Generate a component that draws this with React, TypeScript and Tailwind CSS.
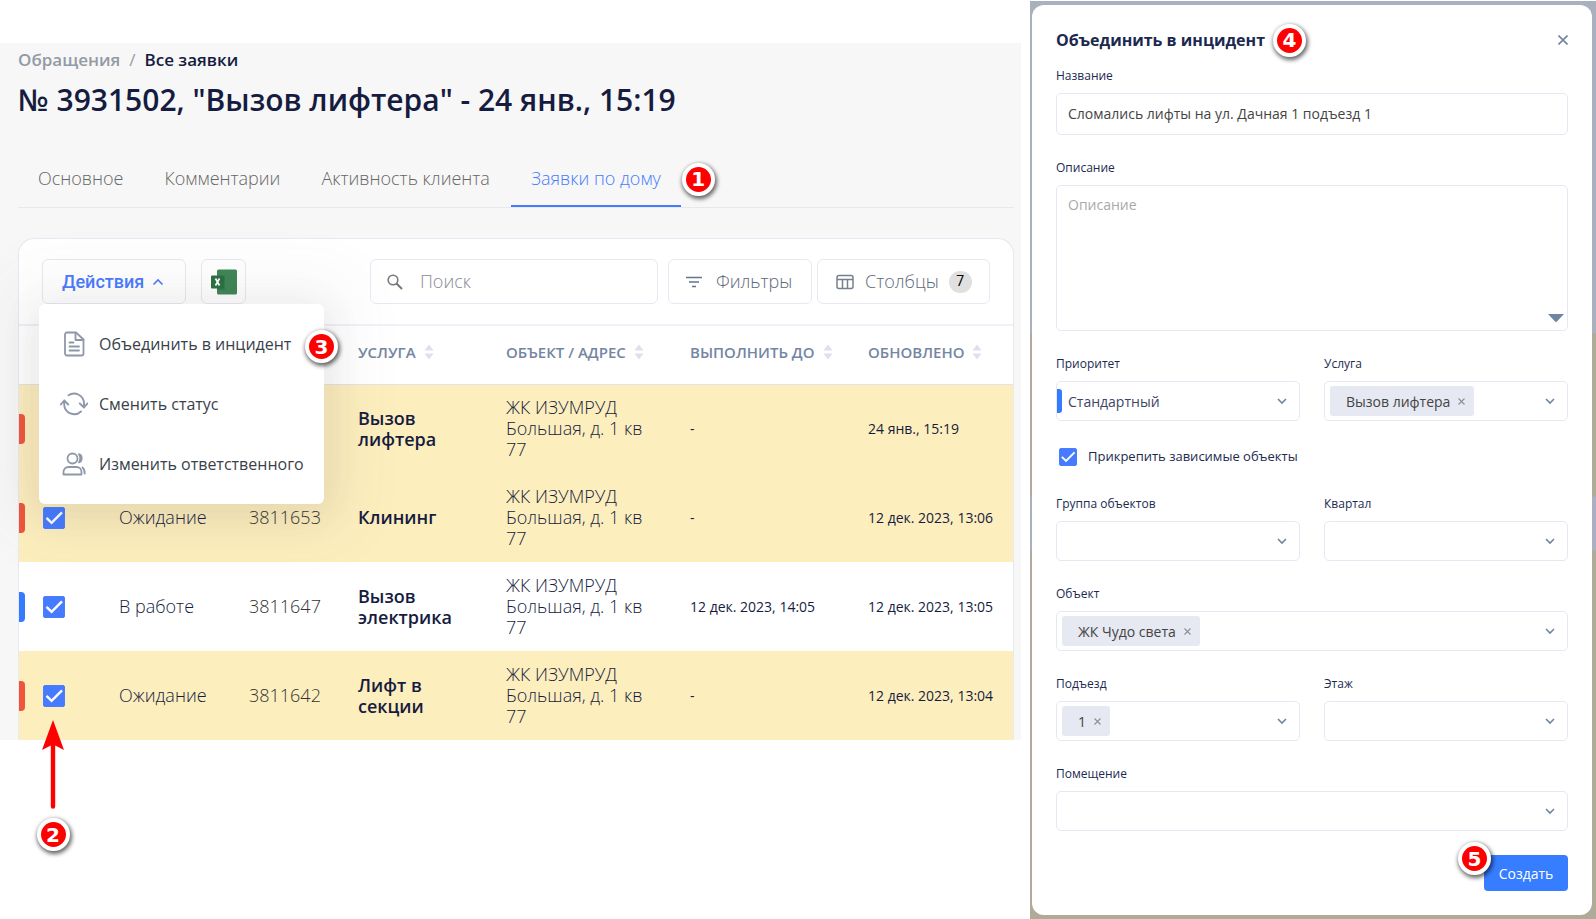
import { useState } from 'react';
import type { ReactNode } from 'react';
import { clsx } from 'clsx';

const tabs = ['Основное', 'Комментарии', 'Активность клиента', 'Заявки по дому'];

const columns = [
  { label: 'Услуга', width: 'w-[148px]' },
  { label: 'Объект / Адрес', width: 'w-[184px]' },
  { label: 'Выполнить до', width: 'w-[178px]' },
  { label: 'Обновлено', width: '' },
];

const rows = [
  { id: '3931502', status: 'Ожидание', service: 'Вызов лифтера', due: '-', updated: '24 янв., 15:19', urgent: true },
  { id: '3811653', status: 'Ожидание', service: 'Клининг', due: '-', updated: '12 дек. 2023, 13:06', urgent: true },
  { id: '3811647', status: 'В работе', service: 'Вызов электрика', due: '12 дек. 2023, 14:05', updated: '12 дек. 2023, 13:05', urgent: false },
  { id: '3811642', status: 'Ожидание', service: 'Лифт в секции', due: '-', updated: '12 дек. 2023, 13:04', urgent: true },
];

function Marker({ n, className }: { n: number; className?: string }) {
  return (
    <span
      className={clsx(
        "flex h-[33px] w-[33px] shrink-0 items-center justify-center rounded-full border-4 border-white bg-[#ff0000] font-['DejaVu_Sans',sans-serif] text-[20px] leading-none font-bold text-white shadow-[1px_2px_4px_1px_rgba(0,0,0,0.6)]",
        className,
      )}
    >
      {n}
    </span>
  );
}

function Chevron({ up, className }: { up?: boolean; className?: string }) {
  return (
    <svg viewBox="0 0 12 8" fill="none" stroke="currentColor" strokeWidth="1.6" className={className}>
      <path d={up ? 'M1.5 6.5 6 2l4.5 4.5' : 'M2 2l4 4 4-4'} />
    </svg>
  );
}

function SortIcon() {
  return (
    <svg viewBox="0 0 10 16" className="h-4 w-[10px]" fill="#dfe0ee">
      <path d="M5 .5 9.6 6.6H.4zM5 15.5.4 9.4h9.2z" />
    </svg>
  );
}

function Check({ id, label, size }: { id: string; label: string; size: string }) {
  return (
    <span className={clsx('relative block shrink-0', size)}>
      <input
        id={id}
        type="checkbox"
        defaultChecked
        aria-label={label}
        className="peer block h-full w-full appearance-none rounded-[2px] border border-[#4a7dff] bg-white checked:bg-[#467bff]"
      />
      <svg viewBox="0 0 22 22" fill="none" stroke="#fff" strokeWidth="2.4" className="pointer-events-none absolute inset-0 hidden h-full w-full peer-checked:block">
        <path d="M3.5 10.8 8.6 15.8 19 5.4" />
      </svg>
    </span>
  );
}

/* Actions menu */
function MenuItem({ icon, children, marker }: { icon: ReactNode; children: ReactNode; marker?: ReactNode }) {
  return (
    <li className="relative">
      <button type="button" className="flex h-[60px] w-full items-center gap-[11px] pl-[21px] text-left text-[16px] text-[#3a3f4a]">
        <span className="flex w-7 shrink-0 justify-center text-[#8e98a8]">{icon}</span>
        {children}
      </button>
      {marker}
    </li>
  );
}

function ActionsMenu() {
  return (
    <ul className="absolute top-full -left-[3px] z-20 w-[285px] rounded-md bg-white py-[10px] shadow-[0_0_60px_30px_rgba(90,90,90,0.05),0_8px_40px_rgba(60,60,60,0.11)]">
      <MenuItem
        marker={<Marker n={3} className="absolute top-4 -right-[14px]" />}
        icon={
          <svg viewBox="0 0 22 26" className="h-[26px] w-[22px]" fill="none" stroke="currentColor" strokeWidth="1.8" strokeLinejoin="round" strokeLinecap="round">
            <path d="M4 1.5h9l7.500 7v14a2 2 0 0 1-2 2H4a2 2 0 0 1-2-2v-19a2 2 0 0 1 2-2z" />
            <path d="M12.5 2v7h8M6.500 11.500h4M6.500 15.500H16M6.500 19.500H16" />
          </svg>
        }
      >
        Объединить в инцидент
      </MenuItem>
      <MenuItem
        icon={
          <svg viewBox="0 0 28 24" className="h-6 w-7" fill="none" stroke="currentColor" strokeWidth="1.9" strokeLinejoin="round" strokeLinecap="round">
            <path d="M8.500 3.200A10 10 0 0 1 24 11.500V15M19.800 11.500 24 15.500 27.300 11.500M21 19.500A10 10 0 0 1 4.200 12.500V8.500M.8 12.500 4.200 8.500 8.200 12.500" />
          </svg>
        }
      >
        Сменить статус
      </MenuItem>
      <MenuItem
        icon={
          <svg viewBox="0 0 24 24" className="h-6 w-6" fill="none" stroke="currentColor" strokeWidth="1.8" strokeLinejoin="round" strokeLinecap="round">
            <circle cx="10.5" cy="6.5" r="5" />
            <path d="M1.500 22.500V20a5 5 0 0 1 5-5h8a5 5 0 0 1 5 5v2.500zM17 2.200c3.600 1.200 3.600 6.800 0 8.200 1.500-2.500 1.500-6 0-8.200zM20.500 15.500c1.600 1.200 2.200 3.600 2.200 6" />
          </svg>
        }
      >
        Изменить ответственного
      </MenuItem>
    </ul>
  );
}

function Toolbar() {
  const [open, setOpen] = useState(true);
  const box = 'flex h-[45px] items-center rounded-md border border-[#e8e8f3]';

  return (
    <div className="flex items-center rounded-t-2xl border-b-2 border-[#f0f1f8] bg-white px-[23px] py-5">
      <div className="relative">
        <button
          type="button"
          aria-expanded={open}
          onClick={() => setOpen(!open)}
          className={clsx(box, 'w-36 gap-2 pl-[19px] font-[Roboto,sans-serif] text-[18px] font-medium text-[#4a7bff]')}
        >
          Действия
          <Chevron up className="h-2 w-3" />
        </button>
        {open && <ActionsMenu />}
      </div>
      <button type="button" aria-label="Excel" className={clsx(box, 'ml-[15px] w-[45px] justify-center')}>
        <svg viewBox="0 0 26 26" className="h-[26px] w-[26px]">
          <rect x="6" y="0.5" width="20" height="25" rx="1.5" fill="#3f8655" />
          <path d="M6 7h8v14H6z" fill="#2f6d43" opacity=".5" />
          <rect x="0" y="6.5" width="13" height="13" rx="1" fill="#2c7041" />
          <path d="M4.500 9.500l4 7M8.500 9.500l-4 7" stroke="#fff" strokeWidth="1.7" />
        </svg>
      </button>

      <label className={clsx(box, 'ml-auto w-[288px] pl-4')}>
        <svg viewBox="0 0 16 16" className="h-4 w-4 shrink-0" fill="none" stroke="#777" strokeWidth="1.6">
          <circle cx="6" cy="6" r="4.8" />
          <path d="M9.500 9.500l5.500 5.500" strokeWidth="2" />
        </svg>
        <input
          aria-label="Поиск"
          placeholder="Поиск"
          className="ml-[17px] w-full min-w-0 bg-transparent text-[18px] font-light outline-none placeholder:text-[#868b94]"
        />
      </label>
      <button type="button" className={clsx(box, 'ml-[10px] w-[144px] pl-[17px] text-[18px] font-light text-[#5d6979]')}>
        <svg viewBox="0 0 16 12" className="mr-[14px] h-3 w-4" stroke="#64748b" strokeWidth="1.6">
          <path d="M0 1.500h16M3 6h10M6 10.500h4" />
        </svg>
        Фильтры
      </button>
      <button type="button" className={clsx(box, 'ml-[5px] w-[173px] pl-[18px] text-[18px] font-light text-[#5d6979]')}>
        <svg viewBox="0 0 18 16" className="mr-[11px] h-4 w-[18px]" fill="none" stroke="#74808f" strokeWidth="1.5">
          <rect x="1" y="1.5" width="16" height="13" rx="2" />
          <path d="M1 5.500h16M6.500 5.500v9M11.500 5.500v9" />
        </svg>
        Столбцы
        <span className="ml-[10px] flex h-[22px] w-[23px] items-center justify-center rounded-full bg-[#e0e0e0] font-[Roboto,sans-serif] text-[14px] font-normal text-black">7</span>
      </button>
    </div>
  );
}

function RequestsTable() {
  return (
    <table className="w-full table-fixed border-collapse bg-white text-left">
      <thead>
        <tr className="h-[58px] border-b border-[#e1e3ea]">
          <th className="w-[100px]" />
          <th className="w-[130px]" />
          <th className="w-[109px]" />
          {columns.map((c) => (
            <th key={c.label} className={clsx('pb-[6px] text-[15px] font-semibold whitespace-nowrap text-[#7486a3] uppercase', c.width)}>
              <span className="flex items-center gap-2">
                {c.label}
                <SortIcon />
              </span>
            </th>
          ))}
        </tr>
      </thead>
      <tbody className="text-[#161c3f]">
        {rows.map((r) => (
          <tr key={r.id} className={clsx('h-[89px]', r.urgent && 'bg-[#fdeebe]')}>
            <td>
              <div className="flex items-center gap-[18px]">
                <span className={clsx('h-[30px] w-[6px] rounded-r', r.urgent ? 'bg-[#f0553c]' : 'bg-[#357bff]')} />
                <Check id={`row-${r.id}`} label={`Заявка ${r.id}`} size="h-[22px] w-[22px]" />
              </div>
            </td>
            <td className="text-[18px] font-light">{r.status}</td>
            <td className="text-[18px] font-light text-[#333]">{r.id}</td>
            <td className="pr-10 text-[18px] leading-[21px] font-semibold">{r.service}</td>
            <td className="pr-8 text-[18px] leading-[21px] font-light">ЖК ИЗУМРУД Большая, д. 1 кв 77</td>
            <td className="text-[14px] whitespace-nowrap">{r.due}</td>
            <td className="text-[14px] whitespace-nowrap">{r.updated}</td>
          </tr>
        ))}
      </tbody>
    </table>
  );
}

function RequestPage() {
  return (
    <main className="relative mt-[43px] min-w-0 self-start bg-[#f7f7f7] pl-[18px]">
      <nav className="flex gap-[9px] pt-[5px] text-[17px] leading-6 font-semibold">
        <a href="#requests" className="text-[#929aa5]">Обращения</a>
        <span className="font-normal text-[#929aa5]">/</span>
        <a href="#all" className="text-[#161c3f]">Все заявки</a>
      </nav>
      <h1 className="mt-2 text-[30px] leading-10 font-semibold text-[#161c3f]">№ 3931502, "Вызов лифтера" - 24 янв., 15:19</h1>

      {/* Tabs */}
      <div className="mt-[31px] mr-[7px] flex h-[57px] items-stretch gap-px border-b border-[#e6e8ef]">
        {tabs.map((t, i) => (
          <a
            key={t}
            href={`#tab-${i}`}
            className={clsx(
              'flex items-center border-b-2 px-5 text-[18px] font-light',
              i === 3 ? 'border-[#467bff] text-[#467bff]' : 'border-transparent text-[#666]',
            )}
          >
            {t}
          </a>
        ))}
        <Marker n={1} className="self-center" />
      </div>

      <section className="mt-[30px] mr-[7px] rounded-t-2xl border border-b-0 border-[#e8e8f3]">
        <Toolbar />
        <RequestsTable />
      </section>

      {/* Arrow up to the row checkboxes */}
      <div className="absolute top-full left-9 -mt-5 flex w-[34px] flex-col items-center gap-2">
        <svg viewBox="0 0 24 90" className="h-[90px] w-6" fill="#ff0000">
          <path d="M12 0 23 30 14.200 25.500V86.500a2.200 2.200 0 0 1-4.400 0V25.500L1 30z" />
        </svg>
        <Marker n={2} />
      </div>
    </main>
  );
}

/* Incident form */
const frame = 'rounded-[5px] border border-[#e6e7f3] bg-white';

function Tag({ children }: { children: string }) {
  return (
    <span className="flex h-[30px] items-center gap-2 rounded-[3px] bg-[#e6e8f2] pr-[9px] pl-4 text-[14px] text-[#444]">
      {children}
      <button type="button" aria-label={`Убрать ${children}`} className="text-[#8a8f9a]">
        <svg viewBox="0 0 7 7" className="h-[7px] w-[7px]" stroke="currentColor" strokeWidth="1.1">
          <path d="M.5.5l6 6M6.500.5l-6 6" />
        </svg>
      </button>
    </span>
  );
}

function SelectField({ id, label, value, tag, wide }: { id: string; label: string; value?: string; tag?: string; wide?: boolean }) {
  return (
    <div className={clsx(wide && 'col-span-2')}>
      <label htmlFor={id} className="block text-[12px] leading-4 text-[#1c2a50]">{label}</label>
      <div className="relative mt-[9px]">
        <select id={id} className={clsx(frame, 'block h-10 w-full appearance-none px-[11px] text-[14px] text-[#3d4663]')}>
          <option>{value}</option>
        </select>
        {value && <span className="absolute top-2 left-px h-6 w-[5px] rounded-r-[3px] bg-[#357bff]" />}
        {tag && <div className="absolute top-[5px] left-[6px]"><Tag>{tag}</Tag></div>}
        <Chevron className="pointer-events-none absolute top-4 right-3 h-2 w-3 text-[#6f86a0]" />
      </div>
    </div>
  );
}

function IncidentForm() {
  return (
    <form className="flex flex-col rounded-xl bg-white px-6 pt-[18px] pb-6" onSubmit={(e) => e.preventDefault()}>
      <header className="flex h-[34px] items-center">
        <h2 className="mr-2 text-[16px] font-bold text-[#1b2850]">Объединить в инцидент</h2>
        <Marker n={4} />
        <button type="button" aria-label="Закрыть" className="ml-auto text-[#6f86a0]">
          <svg viewBox="0 0 10 10" className="h-[10px] w-[10px]" stroke="currentColor" strokeWidth="1.6">
            <path d="M.5.5l9 9M9.500.5l-9 9" />
          </svg>
        </button>
      </header>

      <label htmlFor="name" className="mt-[11px] text-[12px] leading-4 text-[#1c2a50]">Название</label>
      <input id="name" defaultValue="Сломались лифты на ул. Дачная 1 подъезд 1" className={clsx(frame, 'mt-[9px] h-[42px] px-[11px] pb-[2px] text-[14px] text-[#444]')} />

      <label htmlFor="description" className="mt-[25px] text-[12px] leading-4 text-[#1c2a50]">Описание</label>
      <div className="relative mt-[9px] flex">
        <textarea id="description" placeholder="Описание" className={clsx(frame, 'h-[146px] w-full resize-none px-[11px] py-2 text-[14px] placeholder:text-[#a9a9a9]')} />
        <svg viewBox="0 0 16 8" className="absolute right-1 bottom-[9px] h-2 w-4" fill="#6f86a0">
          <path d="M0 0h16L9 7.500a1.500 1.500 0 0 1-2 0z" />
        </svg>
      </div>

      <div className="mt-[25px] grid grid-cols-2 gap-x-6 gap-y-[25px]">
        <SelectField id="priority" label="Приоритет" value="Стандартный" />
        <SelectField id="service" label="Услуга" tag="Вызов лифтера" />
        <div className="col-span-2 flex h-[25px] items-center gap-[11px] pb-[3px] pl-[3px]">
          <Check id="dependent" label="Прикрепить зависимые объекты" size="h-[18px] w-[18px]" />
          <label htmlFor="dependent" className="text-[13px] text-[#1c2a50]">Прикрепить зависимые объекты</label>
        </div>
        <SelectField id="group" label="Группа объектов" />
        <SelectField id="quarter" label="Квартал" />
        <SelectField id="object" label="Объект" tag="ЖК Чудо света" wide />
        <SelectField id="entrance" label="Подъезд" tag="1" />
        <SelectField id="floor" label="Этаж" />
        <SelectField id="room" label="Помещение" wide />
      </div>

      <div className="relative mt-6 self-end">
        <button type="submit" className="h-9 w-[84px] rounded-[4px] bg-[#377dff] text-[14px] text-white">Создать</button>
        <Marker n={5} className="absolute -top-[13px] -left-[26px]" />
      </div>
    </form>
  );
}

export default function App() {
  return (
    <div className="grid min-h-screen grid-cols-[minmax(0,1fr)_566px] gap-[9px] bg-white font-['Open_Sans',sans-serif]">
      <RequestPage />
      <aside className="mt-px bg-[linear-gradient(180deg,#a9b0be_0,#a9b0be_332px,#b0aa99_333px,#b0aa99_495px,#aab0c2_496px,#aab0c2_549px,#b0aa99_550px)] pt-1 pr-1 pb-1 pl-[2px]">
        <IncidentForm />
      </aside>
    </div>
  );
}
